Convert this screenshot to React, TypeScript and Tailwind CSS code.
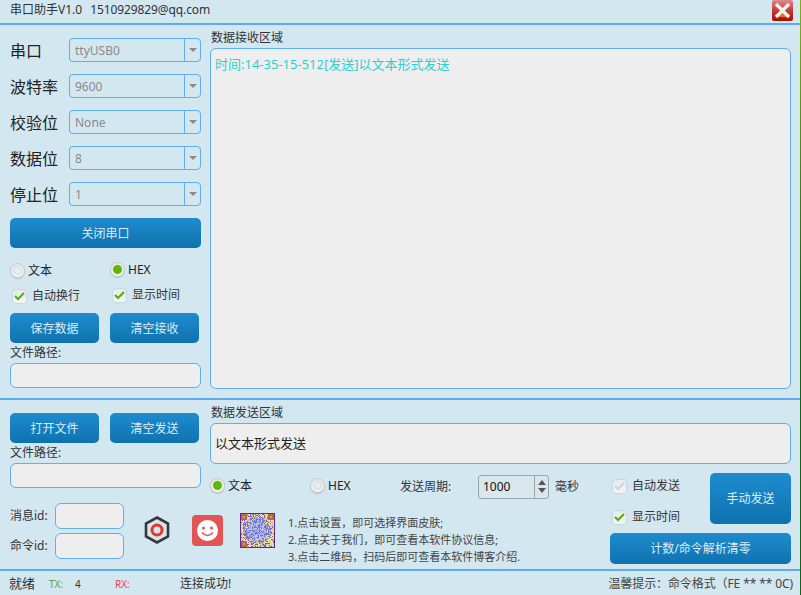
import { useMemo } from 'react';
import type { ReactNode } from 'react';

const FONT = "font-['Noto_Sans','Noto_Sans_CJK_SC',sans-serif]";

function Radio({ checked, label }: { checked?: boolean; label: string }) {
  return (
    <div className="flex items-center">
      <span className="w-[15px] h-[15px] rounded-full border border-[#c4c9cc] bg-gradient-to-b from-[#e4e6e8] to-[#f6f6f6] flex items-center justify-center shadow-[0_1px_1px_#b9c2c8]">
        <span className={`w-[9px] h-[9px] rounded-full ${checked ? 'bg-[#5fb800]' : 'bg-[#e9ecee] border border-[#d4d8da]'}`} />
      </span>
      <span className="ml-[3px] pt-[1px] text-[12px] text-[#222]">{label}</span>
    </div>
  );
}

function Check({ label, disabled }: { label: string; disabled?: boolean }) {
  return (
    <div className="flex items-center">
      <span className="w-[13px] h-[13px] rounded-[3px] bg-gradient-to-b from-[#e6e9eb] to-[#f4f5f5] shadow-[0_0_2px_#aab4ba] flex items-center justify-center">
        <svg width="11" height="10" viewBox="0 0 11 10">
          <path d="M1 5 L4 8 L10 2" fill="none" stroke={disabled ? '#d0d4d6' : '#4fae10'} strokeWidth="2" />
        </svg>
      </span>
      <span className="ml-[6px] text-[12px] text-[#333]">{label}</span>
    </div>
  );
}

function Btn({ children, className }: { children: ReactNode; className: string }) {
  return (
    <button className={`rounded-[5px] bg-gradient-to-b from-[#1e8ccf] to-[#0f72ae] pt-[1px] text-[12px] text-[#dcecf6] ${className}`}>
      {children}
    </button>
  );
}

function SelectRow({ label, value }: { label: string; value: string }) {
  return (
    <div className="flex items-center h-6">
      <span className="w-[59px] pt-[2px] text-[16px] leading-6 text-[#222]">{label}</span>
      <div className="w-[132px] h-6 border border-[#5eaef0] rounded-[4px] flex items-center">
        <span className="flex-1 pl-[5px] pt-[2px] text-[12px] text-[#8a8a8a]">{value}</span>
        <span className="w-[16px] h-full border-l border-[#5eaef0] flex items-center justify-center">
          <span className="w-0 h-0 border-l-[4px] border-r-[4px] border-t-[4px] border-l-transparent border-r-transparent border-t-[#8a8a8a]" />
        </span>
      </div>
    </div>
  );
}

function Field({ className }: { className: string }) {
  return <div className={`bg-[#eeeeee] border border-[#5eaef0] rounded-[6px] ${className}`} />;
}

function HexLogo() {
  return (
    <svg width="30" height="32" viewBox="0 0 30 32">
      <polygon points="15,3.5 26,9.5 26,22.5 15,28.5 4,22.5 4,9.5" fill="none" stroke="#36393c" strokeWidth="2.6" />
      <circle cx="15" cy="16" r="5" fill="none" stroke="#f0321e" strokeWidth="3" />
    </svg>
  );
}

function SmileLogo() {
  return (
    <svg width="31" height="31" viewBox="0 0 31 31">
      <rect width="31" height="31" rx="4" fill="#e05555" />
      <circle cx="15.5" cy="15.5" r="10.5" fill="#ffffff" />
      <circle cx="11.5" cy="13" r="1.5" fill="#e05555" />
      <circle cx="19.5" cy="13" r="1.5" fill="#e05555" />
      <path d="M10 17.5 Q15.5 23.5 21 17.5" fill="none" stroke="#e05555" strokeWidth="1.7" />
    </svg>
  );
}

function QrCode() {
  // cells are only noise, close enough to the real code at this size
  const cells = useMemo(() => {
    const out: { x: number; y: number; c: string }[] = [];
    let seed = 7;
    for (let y = 0; y < 33; y++) {
      for (let x = 0; x < 33; x++) {
        seed = (seed * 1103515245 + 12345) & 0x7fffffff;
        const r = (seed >> 8) % 100;
        const d = Math.hypot(x - 16, y - 16);
        let c = '#6a6cc0';
        if (d < 9) c = r < 35 ? '#a4aae6' : r < 75 ? '#6a72d0' : '#c0c4ee';
        else if (d < 14) c = r < 25 ? '#e8dc9a' : r < 70 ? '#7074cc' : '#b0a4d0';
        else c = r < 55 ? '#ece08e' : r < 78 ? '#7a60b8' : '#d4c8a0';
        out.push({ x, y, c });
      }
    }
    return out;
  }, []);
  const corners = [[1, 1], [28, 1], [1, 28]];
  return (
    <svg width="35" height="35" viewBox="0 0 35 35" shapeRendering="crispEdges">
      <rect width="35" height="35" fill="#5a2a90" />
      {cells.map(c => <rect key={`${c.x}-${c.y}`} x={c.x + 1} y={c.y + 1} width="1" height="1" fill={c.c} />)}
      {corners.map(([x, y]) => (
        <g key={`${x}-${y}`}>
          <rect x={x} y={y} width="6" height="6" fill="#c8603a" />
          <rect x={x + 2} y={y + 2} width="2" height="2" fill="#a8a0c0" />
        </g>
      ))}
    </svg>
  );
}

function CloseBtn() {
  return (
    <svg width="21" height="21" viewBox="0 0 21 21">
      <defs>
        <linearGradient id="closeBg" x1="0" y1="0" x2="0" y2="1">
          <stop offset="0" stopColor="#e08a8c" />
          <stop offset="0.5" stopColor="#c4393a" />
          <stop offset="1" stopColor="#a81000" />
        </linearGradient>
      </defs>
      <rect width="21" height="21" rx="2" fill="url(#closeBg)" />
      <path d="M5 17 L10.5 12 L16 17 Z" fill="#f06a10" />
      <path d="M4 4 L17 17 M17 4 L4 17" stroke="#f4f0ee" strokeWidth="3.4" />
    </svg>
  );
}

function Spin() {
  return (
    <div className="w-[71px] h-[24px] border border-[#9aa6ae] rounded-[3px] flex items-center bg-[#d9e6ec]">
      <span className="flex-1 pl-[4px] pt-[1px] text-[12px] text-[#111]">1000</span>
      <span className="w-[14px] h-full border-l border-[#9aa6ae] flex flex-col items-center justify-center gap-[3px]">
        <span className="w-0 h-0 border-l-[4px] border-r-[4px] border-b-[5px] border-l-transparent border-r-transparent border-b-[#555]" />
        <span className="w-0 h-0 border-l-[4px] border-r-[4px] border-t-[5px] border-l-transparent border-r-transparent border-t-[#555]" />
      </span>
    </div>
  );
}

export default function App() {
  return (
    <div className={`${FONT} w-[801px] h-[595px] overflow-hidden bg-[#d3e7f1] flex`}>
      <div className="w-[800px] flex flex-col">
        {/* title bar */}
        <div className="h-[23px] flex items-start justify-between pl-[10px] pr-[7px] text-[12px] text-[#333]">
          <span className="leading-[18px] pt-[1px]">
            串口助手V1.0<span className="ml-[8px] tracking-[-0.1px]">1510929829@qq.com</span>
          </span>
          <CloseBtn />
        </div>

        {/* receive area */}
        <div className="h-[377px] border-y-2 border-[#5caaf0] flex">
          <div className="w-[210px] pl-[10px] pt-[13px] flex flex-col">
            <div className="flex flex-col gap-3">
              <SelectRow label="串口" value="ttyUSB0" />
              <SelectRow label="波特率" value="9600" />
              <SelectRow label="校验位" value="None" />
              <SelectRow label="数据位" value="8" />
              <SelectRow label="停止位" value="1" />
            </div>
            <Btn className="w-[191px] h-[30px] mt-3">关闭串口</Btn>
            <div className="flex h-4 mt-[13px]">
              <div className="w-[100px]"><Radio label="文本" /></div>
              <Radio checked label="HEX" />
            </div>
            <div className="flex h-4 mt-[10px] pl-[3px]">
              <div className="w-[100px]"><Check label="自动换行" /></div>
              <Check label="显示时间" />
            </div>
            <div className="flex gap-[11px] mt-[10px]">
              <Btn className="w-[89px] h-[30px]">保存数据</Btn>
              <Btn className="w-[89px] h-[30px]">清空接收</Btn>
            </div>
            <div className="h-[20px] text-[12px] leading-[20px] text-[#333]">文件路径:</div>
            <Field className="w-[191px] h-[25px]" />
          </div>
          <div className="flex-1 flex flex-col">
            <div className="h-[23px] pt-[4px] pl-[1px] text-[12px] leading-[18px] text-[#333]">数据接收区域</div>
            <div className="w-[581px] h-[341px] bg-[#eeeeee] border border-[#5eaef0] rounded-[6px] px-[4px] pt-[6px] text-[13px] leading-[18px] text-[#2ad0d4]">
              时间:14-35-15-512[发送]以文本形式发送
            </div>
          </div>
        </div>

        {/* send area */}
        <div className="h-[169px] grid grid-cols-[210px_400px_190px] grid-rows-[73px_27px_69px]">
          <div className="row-span-2 pl-[10px] pt-[13px] flex flex-col">
            <div className="flex gap-[11px]">
              <Btn className="w-[89px] h-[30px]">打开文件</Btn>
              <Btn className="w-[89px] h-[30px]">清空发送</Btn>
            </div>
            <div className="h-[20px] text-[12px] leading-[20px] text-[#333]">文件路径:</div>
            <Field className="w-[191px] h-[25px]" />
          </div>
          <div className="col-span-2">
            <div className="h-[23px] pt-[4px] pl-[1px] text-[12px] leading-[18px] text-[#333]">数据发送区域</div>
            <div className="w-[581px] h-[41px] bg-[#eeeeee] border border-[#5eaef0] rounded-[6px] px-[4px] pt-[1px] flex items-center text-[13px] text-[#222]">
              以文本形式发送
            </div>
          </div>
          <div className="flex items-center text-[12px] text-[#333]">
            <div className="w-[100px] -mt-[3px]"><Radio checked label="文本" /></div>
            <div className="w-[90px] -mt-[3px]"><Radio label="HEX" /></div>
            <span className="w-[78px] pt-[1px]">发送周期:</span>
            <Spin />
            <span className="ml-[6px] pt-[1px]">毫秒</span>
          </div>
          <div className="row-span-2 flex flex-wrap content-start pb-[5px]">
            <div className="w-[100px] h-[51px] pl-[3px] pt-[4px] flex flex-col gap-[13px]">
              <Check disabled label="自动发送" />
              <Check label="显示时间" />
            </div>
            <Btn className="w-[81px] h-[51px]">手动发送</Btn>
            <Btn className="w-[181px] h-[31px] mt-[9px]">计数/命令解析清零</Btn>
          </div>
          <div className="col-span-2 pl-[10px] flex items-start text-[#333]">
            <div className="w-[114px] pt-[3px] flex flex-col gap-1 text-[12px]">
              <div className="flex items-center">
                <span className="w-[45px]">消息id:</span>
                <Field className="w-[69px] h-[26px]" />
              </div>
              <div className="flex items-center">
                <span className="w-[45px]">命令id:</span>
                <Field className="w-[69px] h-[26px]" />
              </div>
            </div>
            <div className="ml-[18px] mt-[14px]"><HexLogo /></div>
            <div className="ml-[20px] mt-[15px]"><SmileLogo /></div>
            <div className="ml-[17px] mt-[13px]"><QrCode /></div>
            <div className="ml-[13px] mt-[14px] text-[11px] leading-[17px] text-[#444] whitespace-nowrap">
              <div>1.点击设置，即可选择界面皮肤;</div>
              <div>2.点击关于我们，即可查看本软件协议信息;</div>
              <div>3.点击二维码，扫码后即可查看本软件博客介绍.</div>
            </div>
          </div>
        </div>

        {/* status bar */}
        <div className="h-[26px] border-t-2 border-[#5caaf0] flex items-center pl-[9px] pr-[7px] pt-[2px] text-[#333]">
          <span className="w-[40px] text-[13px]">就绪</span>
          <span className="w-[26px] text-[10px] text-[#6aa030]">TX:</span>
          <span className="w-[40px] text-[10px]">4</span>
          <span className="w-[65px] text-[10px] text-[#f04040]">RX:</span>
          <span className="text-[12px]">连接成功!</span>
          <span className="ml-auto text-[12px] text-[#444] tracking-[-0.1px]">温馨提示：命令格式（FE ** ** 0C)</span>
        </div>
      </div>
      <div className="w-[1px] bg-gradient-to-b from-[#7ab800] via-[#0a6a10] to-[#0a6a10]" />
    </div>
  );
}
